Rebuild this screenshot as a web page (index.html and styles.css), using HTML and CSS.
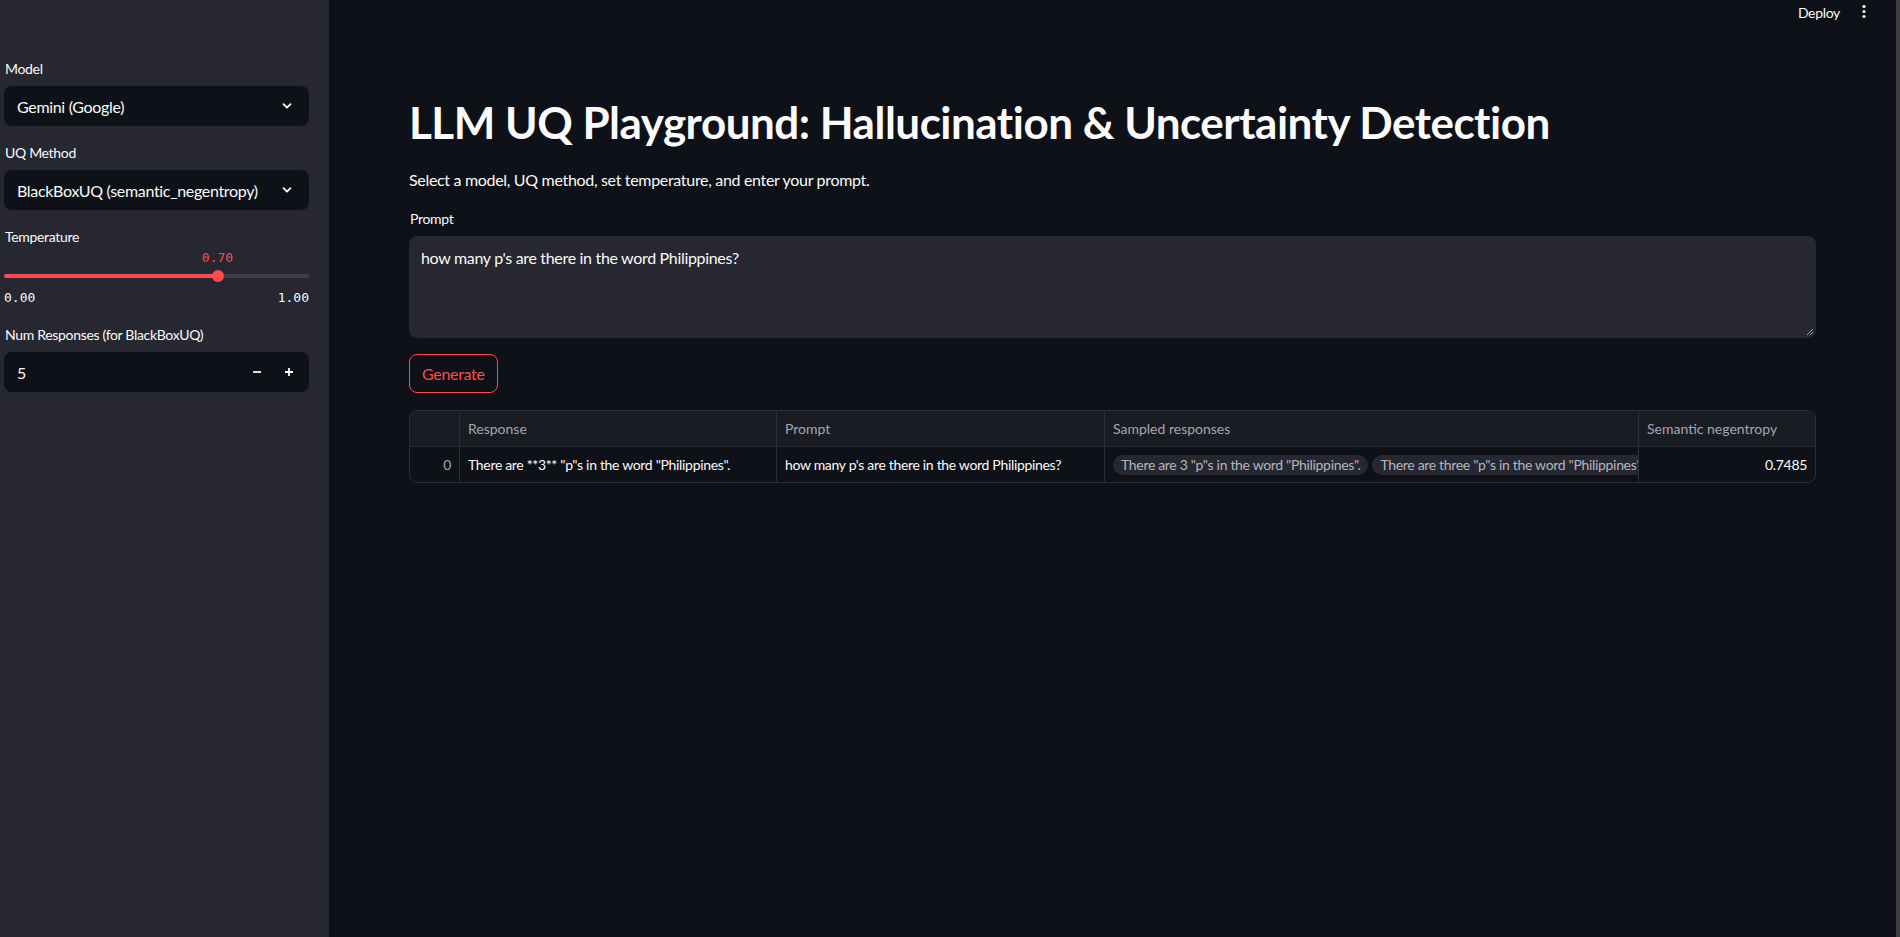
FILE: index.html
```html
<!DOCTYPE html>
<html lang="en">
<head>
<meta charset="utf-8">
<title>LLM UQ Playground</title>
<link rel="stylesheet" href="styles.css">
</head>
<body>
<div class="app">
  <aside class="sidebar">
    <div class="widget">
      <div class="label">Model</div>
      <div class="select"><span>Gemini (Google)</span>
        <svg class="chev" width="12" height="12" viewBox="0 0 12 12"><path d="M2.5 4.2 L6 7.7 L9.5 4.2" fill="none" stroke="#fafafa" stroke-width="1.8" stroke-linecap="round" stroke-linejoin="round"/></svg>
      </div>
    </div>
    <div class="widget">
      <div class="label">UQ Method</div>
      <div class="select"><span>BlackBoxUQ (semantic_negentropy)</span>
        <svg class="chev" width="12" height="12" viewBox="0 0 12 12"><path d="M2.5 4.2 L6 7.7 L9.5 4.2" fill="none" stroke="#fafafa" stroke-width="1.8" stroke-linecap="round" stroke-linejoin="round"/></svg>
      </div>
    </div>
    <div class="widget">
      <div class="label">Temperature</div>
      <div class="slider">
        <div class="slider-value-row"><span class="slider-value" style="left:70%">0.70</span></div>
        <div class="track">
          <div class="track-fill" style="width:70%"></div>
          <div class="thumb" style="left:70%"></div>
        </div>
        <div class="ticks"><span>0.00</span><span>1.00</span></div>
      </div>
    </div>
    <div class="widget">
      <div class="label">Num Responses (for BlackBoxUQ)</div>
      <div class="number">
        <span class="num-value">5</span>
        <div class="steps">
          <span class="step"><svg width="12" height="12" viewBox="0 0 12 12"><path d="M2 6 H10" stroke="#fafafa" stroke-width="1.8"/></svg></span>
          <span class="step"><svg width="12" height="12" viewBox="0 0 12 12"><path d="M2 6 H10 M6 2 V10" stroke="#fafafa" stroke-width="1.8"/></svg></span>
        </div>
      </div>
    </div>
  </aside>

  <main class="main">
    <header class="topbar">
      <span class="deploy">Deploy</span>
      <svg class="kebab" width="6" height="16" viewBox="0 0 6 16"><circle cx="3" cy="2.5" r="1.6" fill="#fafafa"/><circle cx="3" cy="7.5" r="1.6" fill="#fafafa"/><circle cx="3" cy="12.5" r="1.6" fill="#fafafa"/></svg>
    </header>
    <div class="content">
      <h1 class="title">LLM UQ Playground: Hallucination &amp; Uncertainty Detection</h1>
      <p class="subtitle">Select a model, UQ method, set temperature, and enter your prompt.</p>
      <div class="label">Prompt</div>
      <div class="textarea">how many p's are there in the word Philippines?
        <svg class="resize" width="8" height="8" viewBox="0 0 8 8"><path d="M7 1 L1 7 M7 4 L4 7" stroke="#9a9ca6" stroke-width="1"/></svg>
      </div>
      <div class="btn-row"><button class="btn">Generate</button></div>
      <div class="table">
        <div class="cell head idx"></div>
        <div class="cell head">Response</div>
        <div class="cell head">Prompt</div>
        <div class="cell head">Sampled responses</div>
        <div class="cell head last">Semantic negentropy</div>
        <div class="cell idx num">0</div>
        <div class="cell">There are **3** "p"s in the word "Philippines".</div>
        <div class="cell">how many p's are there in the word Philippines?</div>
        <div class="cell chips"><span class="chip">There are 3 "p"s in the word "Philippines".</span><span class="chip">There are three "p"s in the word "Philippines".</span></div>
        <div class="cell num last">0.7485</div>
      </div>
    </div>
  </main>
  <div class="scrollbar"></div>
</div>
</body>
</html>
```

FILE: styles.css
```css
* { box-sizing: border-box; }
html, body { margin: 0; padding: 0; height: 100%; }
body {
  background: #0e1117;
  color: #fafafa;
  font-family: "Lato", "Noto Sans", sans-serif;
  letter-spacing: -0.02em;
  overflow: hidden;
}
.app { display: flex; height: 937px; }

.sidebar {
  width: 329px;
  flex: none;
  background: #262730;
  padding: 59px 20px 0 4px;
  display: flex;
  flex-direction: column;
  gap: 17px;
}
.widget { display: flex; flex-direction: column; }
.label {
  font-size: 14px;
  line-height: 20px;
  padding-left: 1px;
  margin-bottom: 7px;
  color: #fafafa;
}
.select {
  height: 40px;
  background: #0e1117;
  border-radius: 8px;
  display: flex;
  align-items: center;
  justify-content: space-between;
  padding: 0 16px 0 13px;
  font-size: 16px;
}
.chev { display: block; }

.slider { display: flex; flex-direction: column; margin-top: -6px; }
.slider-value-row { position: relative; height: 20px; }
.slider-value {
  position: absolute;
  top: 0;
  transform: translateX(-50%);
  font-family: "DejaVu Sans Mono", "Liberation Mono", monospace;
  letter-spacing: 0;
  font-size: 13px;
  line-height: 20px;
  color: #ff4b4b;
}
.track {
  position: relative;
  height: 4px;
  margin: 6px 0 10px;
  background: #3d3f4b;
  border-radius: 2px;
}
.track-fill { height: 4px; background: #ff4b4b; border-radius: 2px; }
.thumb {
  position: absolute;
  top: -4px;
  width: 12px;
  height: 12px;
  margin-left: -6px;
  border-radius: 50%;
  background: #ff4b4b;
}
.ticks {
  display: flex;
  justify-content: space-between;
  font-family: "DejaVu Sans Mono", "Liberation Mono", monospace;
  letter-spacing: 0;
  font-size: 13px;
  line-height: 20px;
  color: #fafafa;
}

.number {
  height: 40px;
  background: #0e1117;
  border-radius: 8px;
  display: flex;
  align-items: center;
  justify-content: space-between;
  padding: 0 4px 0 13px;
  font-size: 16px;
}
.steps { display: flex; }
.step { width: 32px; height: 40px; display: flex; align-items: center; justify-content: center; }

.main { flex: 1; display: flex; flex-direction: column; min-width: 0; }
.topbar {
  height: 24px;
  display: flex;
  justify-content: flex-end;
  align-items: center;
  gap: 21px;
  padding-right: 29px;
  font-size: 14px;
}
.kebab { display: block; }

.content {
  width: 1407px;
  margin: 0 auto;
  padding-top: 72px;
  display: flex;
  flex-direction: column;
}
.title {
  margin: 0 0 19px;
  font-size: 44px;
  line-height: 53px;
  font-weight: 700;
  letter-spacing: -0.5px;
}
.subtitle {
  margin: 0 0 17px;
  font-size: 16px;
  line-height: 24px;
}
.textarea {
  position: relative;
  height: 102px;
  background: #262730;
  border-radius: 8px;
  padding: 10px 12px;
  font-size: 16px;
  line-height: 24px;
  white-space: pre-line;
}
.resize { position: absolute; right: 2px; bottom: 2px; }
.btn-row { margin-top: 16px; display: flex; }
.btn {
  height: 39px;
  padding: 0 12px;
  background: transparent;
  color: #ff4b4b;
  border: 1px solid #ff4b4b;
  border-radius: 8px;
  font-family: inherit;
  letter-spacing: inherit;
  font-size: 16px;
}

.table {
  margin-top: 17px;
  display: grid;
  grid-template-columns: 50px 317px 328px 534px 1fr;
  grid-template-rows: 36px 35px;
  border: 1px solid #2b2d37;
  border-radius: 8px;
  overflow: hidden;
  font-size: 14px;
}
.cell {
  padding: 0 8px;
  display: flex;
  align-items: center;
  white-space: nowrap;
  overflow: hidden;
  border-right: 1px solid #2b2d37;
  color: #fafafa;
}
.cell.last { border-right: none; }
.cell.head {
  background: #1a1c24;
  color: #a3a6b0;
  letter-spacing: 0;
  border-bottom: 1px solid #2b2d37;
}
.cell.num { justify-content: flex-end; }
.cell.idx.num { color: #a3a6b0; }
.chips { gap: 4px; padding-right: 0; }
.chip {
  flex: none;
  height: 20px;
  line-height: 20px;
  padding: 0 8px;
  border-radius: 10px;
  background: #262730;
  color: #b4b6bf;
}

.scrollbar { width: 4px; flex: none; background: #3e3e3e; }
```
